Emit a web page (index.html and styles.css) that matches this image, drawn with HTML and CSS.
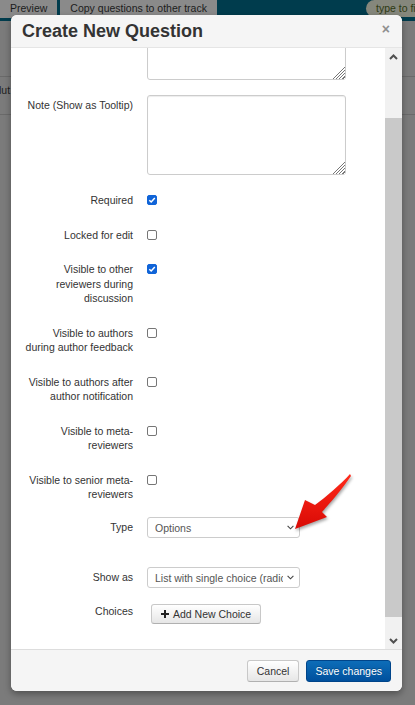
FILE: index.html
```html
<!DOCTYPE html>
<html lang="en">
<head>
    <meta charset="UTF-8">
    <meta name="viewport" content="width=device-width, initial-scale=1.0">
    <title>Create New Question</title>
    <link rel="stylesheet" href="styles.css">
</head>
<body>
    <div class="page">
      <div class="topbar">
        <span class="tab">Preview</span>
        <span class="tab">Copy questions to other track</span>
        <span class="search">type to find</span>
      </div>
      <div class="page-row">lut</div>
    </div>

    <div class="modal">
      <div class="modal-header">
        <h3>Create New Question</h3>
        <span class="close">&times;</span>
      </div>
      <div class="modal-body">
        <div class="scroll-area">
          <form class="form">
            <div class="row row-first">
              <label></label>
              <textarea></textarea>
            </div>
            <div class="row row-note">
              <label class="label-pad">Note (Show as Tooltip)</label>
              <textarea></textarea>
            </div>
            <div class="row">
              <label>Required</label>
              <span class="cb checked"><svg width="8" height="8" viewBox="0 0 8 8"><path d="M1.3 4.2 L3.2 6 L6.8 2" fill="none" stroke="#fff" stroke-width="1.5"/></svg></span>
            </div>
            <div class="row">
              <label>Locked for edit</label>
              <span class="cb"></span>
            </div>
            <div class="row">
              <label>Visible to other reviewers during discussion</label>
              <span class="cb checked"><svg width="8" height="8" viewBox="0 0 8 8"><path d="M1.3 4.2 L3.2 6 L6.8 2" fill="none" stroke="#fff" stroke-width="1.5"/></svg></span>
            </div>
            <div class="row">
              <label>Visible to authors during author feedback</label>
              <span class="cb"></span>
            </div>
            <div class="row">
              <label>Visible to authors after author notification</label>
              <span class="cb"></span>
            </div>
            <div class="row">
              <label>Visible to meta-reviewers</label>
              <span class="cb"></span>
            </div>
            <div class="row row-last-check">
              <label>Visible to senior meta-reviewers</label>
              <span class="cb"></span>
            </div>
            <div class="row row-select">
              <label>Type</label>
              <div class="select">
                <span>Options</span>
                <svg width="7" height="5" viewBox="0 0 7 5"><path d="M0.6 0.8 L3.5 3.8 L6.4 0.8" fill="none" stroke="#444" stroke-width="1.1"/></svg>
              </div>
            </div>
            <div class="row row-select row-show">
              <label>Show as</label>
              <div class="select">
                <span>List with single choice (radio buttons)</span>
                <svg width="7" height="5" viewBox="0 0 7 5"><path d="M0.6 0.8 L3.5 3.8 L6.4 0.8" fill="none" stroke="#444" stroke-width="1.1"/></svg>
              </div>
            </div>
            <div class="row">
              <label>Choices</label>
              <button type="button" class="btn btn-add">
                <svg width="8" height="8" viewBox="0 0 8 8"><path d="M4 0 V8 M0 4 H8" stroke="#222" stroke-width="2"/></svg>
                Add New Choice
              </button>
            </div>
          </form>
        </div>
        <div class="scrollbar">
          <div class="sb-btn"><svg width="9" height="6" viewBox="0 0 9 6"><path d="M1 5 L4.5 1.5 L8 5" fill="none" stroke="#505050" stroke-width="2"/></svg></div>
          <div class="sb-track"><div class="sb-thumb"></div></div>
          <div class="sb-btn"><svg width="9" height="6" viewBox="0 0 9 6"><path d="M1 1 L4.5 4.5 L8 1" fill="none" stroke="#505050" stroke-width="2"/></svg></div>
        </div>
      </div>
      <div class="modal-footer">
        <button type="button" class="btn btn-cancel">Cancel</button>
        <button type="button" class="btn btn-primary">Save changes</button>
      </div>
    </div>

    <svg class="pointer" width="80" height="80" viewBox="282 462 80 80">
      <defs>
        <linearGradient id="red" x1="0" y1="0" x2="0" y2="1">
          <stop offset="0" stop-color="#ff2a1a"/>
          <stop offset="1" stop-color="#d90a05"/>
        </linearGradient>
      </defs>
      <path d="M350 474 C341 484 326 497 315 505 L305 500 L295 529 L327 517 L322 512 C331 502 343 488 351 476 Z" fill="url(#red)"/>
    </svg>
</body>
</html>
```

FILE: styles.css
```css
body { margin: 0; width: 415px; height: 705px; overflow: hidden; position: relative; background: #7b7b7b; font-family: "Liberation Sans", Arial, sans-serif; color: #333; }

/* page behind the backdrop */
.topbar { display: flex; align-items: flex-start; gap: 3px; height: 21px; background: #003c4d; }
.tab { height: 18px; line-height: 16px; padding: 0 10px; background: #8a8a8a; color: #1c1c1c; font-size: 10.5px; }
.search { margin-left: auto; width: 39px; height: 17px; line-height: 17px; padding-left: 10px; border-radius: 9px 0 0 9px; background: #85877c; color: #2e3a12; font-size: 10.5px; white-space: nowrap; overflow: hidden; }
.page-row { margin-top: 55px; height: 39px; border-top: 1px solid #6a6a6a; border-bottom: 1px solid #6a6a6a; padding-top: 7px; box-sizing: border-box; font-size: 10.5px; color: #1e1e1e; margin-left: -1px; }

/* dialog */
.modal { position: absolute; left: 11px; top: 15px; width: 391px; height: 676px; display: flex; flex-direction: column; background: #fff; border-radius: 6px; box-shadow: 0 3px 7px rgba(0,0,0,0.35); overflow: hidden; }
.modal-header { height: 33px; box-sizing: border-box; border-bottom: 1px solid #e5e5e5; background: #f5f5f5; display: flex; align-items: center; justify-content: space-between; padding: 0 12px 0 11px; }
.modal-header h3 { margin: 0; font-size: 18px; font-weight: bold; color: #333; }
.close { font-size: 14px; font-weight: bold; color: #8f8f8f; margin-bottom: 4px; }
.modal-body { height: 601px; display: flex; }
.scroll-area { flex: 1; overflow: hidden; }
.form { margin: -48px 0 0 0; padding-left: 12px; }
.row { display: flex; align-items: flex-start; gap: 14px; margin-bottom: 20px; }
.row label { width: 110px; flex: none; text-align: right; font-size: 10.5px; line-height: 14.5px; color: #333; }
.row-first { margin-bottom: 15px; }
.row-note { margin-bottom: 18px; }
.row-note .label-pad { padding-top: 3px; }
.row-last-check { margin-bottom: 15.5px; }
.row-select { align-items: center; margin-bottom: 29px; }
.row-show { margin-bottom: 16px; }

textarea { width: 199px; height: 80px; box-sizing: border-box; border: 1px solid #ccc; border-radius: 3px; box-shadow: inset 0 1px 1px rgba(0,0,0,0.075); margin: 0; font-family: inherit; }
textarea::-webkit-resizer { background: linear-gradient(135deg, #fff 52%, transparent 52%), repeating-linear-gradient(135deg, #fff 0 1.2px, #777 1.2px 2.2px); }

.cb { width: 10px; height: 10px; box-sizing: border-box; margin-top: 2px; border: 1px solid #767676; border-radius: 2px; display: flex; align-items: center; justify-content: center; background: #fff; }
.cb.checked { background: #1064d8; border-color: #1064d8; }

.select { width: 153px; height: 21px; box-sizing: border-box; border: 1px solid #ccc; border-radius: 3px; background: #fff; display: flex; align-items: center; gap: 4px; padding: 0 5px 0 7px; font-size: 10.5px; color: #555; }
.select span { flex: 1; white-space: nowrap; overflow: hidden; }

.btn { font-family: inherit; font-size: 10.5px; border-radius: 3px; cursor: pointer; }
.btn-add { margin-left: 4px; height: 20px; display: flex; align-items: center; gap: 4px; padding: 0 9px 0 9px; color: #333; border: 1px solid #c8c8c8; border-bottom-color: #b0b0b0; background: linear-gradient(#ffffff, #e6e6e6); }

.scrollbar { width: 17px; flex: none; background: #f1f1f1; display: flex; flex-direction: column; }
.sb-btn { height: 17px; display: flex; align-items: center; justify-content: center; }
.sb-track { flex: 1; padding-top: 53px; }
.sb-thumb { height: 499px; background: #c9c9c9; }

.modal-footer { height: 42px; box-sizing: border-box; border-top: 1px solid #ddd; background: #f5f5f5; display: flex; align-items: center; justify-content: flex-end; gap: 7px; padding: 0 11px 0 0; }
.btn-cancel { height: 22px; padding: 0 9px; color: #333; border: 1px solid #c8c8c8; border-bottom-color: #b0b0b0; background: linear-gradient(#ffffff, #e6e6e6); }
.btn-primary { height: 22px; padding: 0 8px; color: #fff; border: 1px solid #00458a; background: linear-gradient(#0d6db8, #00509d); text-shadow: 0 -1px 0 rgba(0,0,0,0.25); }

.pointer { position: absolute; left: 282px; top: 462px; filter: drop-shadow(1px 2px 1.5px rgba(0,0,0,0.35)); }
```
